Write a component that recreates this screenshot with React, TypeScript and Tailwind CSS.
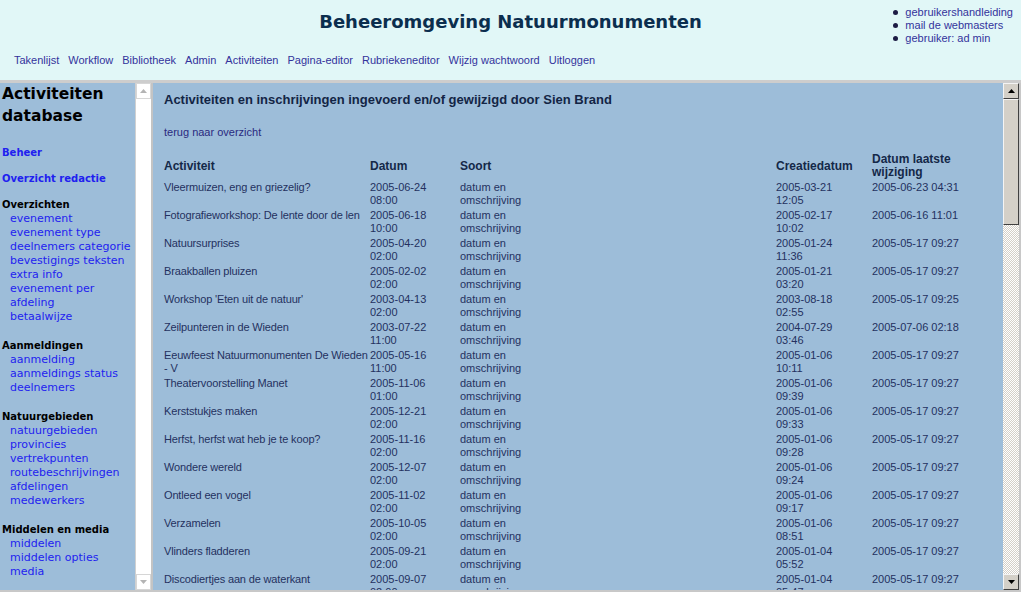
import React from 'react';

const sans = "font-['Liberation_Sans',Arial,sans-serif]";
const verdana = "font-['DejaVu_Sans',Verdana,sans-serif]";

const navItems = [
  'Takenlijst',
  'Workflow',
  'Bibliotheek',
  'Admin',
  'Activiteiten',
  'Pagina-editor',
  'Rubriekeneditor',
  'Wijzig wachtwoord',
  'Uitloggen',
];

const groups = [
  {
    title: 'Overzichten',
    links: ['evenement', 'evenement type', 'deelnemers categorie', 'bevestigings teksten', 'extra info', 'evenement per afdeling', 'betaalwijze'],
  },
  { title: 'Aanmeldingen', links: ['aanmelding', 'aanmeldings status', 'deelnemers'] },
  {
    title: 'Natuurgebieden',
    links: ['natuurgebieden', 'provincies', 'vertrekpunten', 'routebeschrijvingen', 'afdelingen', 'medewerkers'],
  },
  { title: 'Middelen en media', links: ['middelen', 'middelen opties', 'media'] },
];

// activiteit, datum, tijd, creatie datum, creatie tijd, laatste wijziging
const rows: [string, string, string, string, string, string][] = [
  ['Vleermuizen, eng en griezelig?', '2005-06-24', '08:00', '2005-03-21', '12:05', '2005-06-23 04:31'],
  ['Fotografieworkshop: De lente door de len', '2005-06-18', '10:00', '2005-02-17', '10:02', '2005-06-16 11:01'],
  ['Natuursurprises', '2005-04-20', '02:00', '2005-01-24', '11:36', '2005-05-17 09:27'],
  ['Braakballen pluizen', '2005-02-02', '02:00', '2005-01-21', '03:20', '2005-05-17 09:27'],
  ["Workshop 'Eten uit de natuur'", '2003-04-13', '02:00', '2003-08-18', '02:55', '2005-05-17 09:25'],
  ['Zeilpunteren in de Wieden', '2003-07-22', '11:00', '2004-07-29', '03:46', '2005-07-06 02:18'],
  ['Eeuwfeest Natuurmonumenten De Wieden - V', '2005-05-16', '11:00', '2005-01-06', '10:11', '2005-05-17 09:27'],
  ['Theatervoorstelling Manet', '2005-11-06', '01:00', '2005-01-06', '09:39', '2005-05-17 09:27'],
  ['Kerststukjes maken', '2005-12-21', '02:00', '2005-01-06', '09:33', '2005-05-17 09:27'],
  ['Herfst, herfst wat heb je te koop?', '2005-11-16', '02:00', '2005-01-06', '09:28', '2005-05-17 09:27'],
  ['Wondere wereld', '2005-12-07', '02:00', '2005-01-06', '09:24', '2005-05-17 09:27'],
  ['Ontleed een vogel', '2005-11-02', '02:00', '2005-01-06', '09:17', '2005-05-17 09:27'],
  ['Verzamelen', '2005-10-05', '02:00', '2005-01-06', '08:51', '2005-05-17 09:27'],
  ['Vlinders fladderen', '2005-09-21', '02:00', '2005-01-04', '05:52', '2005-05-17 09:27'],
  ['Discodiertjes aan de waterkant', '2005-09-07', '02:00', '2005-01-04', '05:47', '2005-05-17 09:27'],
];

const Arrow: React.FC<{ down?: boolean; color: string }> = ({ down, color }) => (
  <svg width="7" height="4" viewBox="0 0 7 4" className={down ? 'rotate-180' : ''}>
    <polygon points="3.5,0 7,4 0,4" fill={color} />
  </svg>
);

const App: React.FC = () => {
  return (
    <div className={`w-full h-screen overflow-hidden flex flex-col bg-[#e1f7f7] ${sans}`}>
      {/* header */}
      <div className="h-[80px] shrink-0">
        <div className="grid grid-cols-[1fr_auto_1fr] items-start">
          <div />
          <h1 className={`pt-[10px] leading-[24px] text-[18px] font-bold text-[#0b2e4e] ${verdana}`}>
            Beheeromgeving Natuurmonumenten
          </h1>
          <ul className="justify-self-end pt-[6px] pr-[8px] text-[11px] leading-[13px] text-[#33339c]">
            {['gebruikershandleiding', 'mail de webmasters', 'gebruiker: ad min'].map((t) => (
              <li key={t} className="flex items-center">
                <span className="w-[5px] h-[5px] rounded-full bg-[#1c1c44] mr-[7px]" />
                <span>{t}</span>
              </li>
            ))}
          </ul>
        </div>
        <div className="mt-[9px] pl-[14px] flex gap-[9px] text-[11px] leading-[13px] text-[#33339c]">
          {navItems.map((n) => (
            <span key={n}>{n}</span>
          ))}
        </div>
      </div>
      <div className="h-[3px] shrink-0 bg-[#cdcdcd]" />

      {/* frames */}
      <div className="flex h-[507px] shrink-0">
        {/* left frame */}
        <div className={`w-[135px] shrink-0 bg-[#9dbdd9] pl-[2px] overflow-hidden ${verdana}`}>
          <div className="text-[15.5px] font-bold leading-[22px] text-black">
            Activiteiten
            <br />
            database
          </div>
          <div className="mt-[19px] text-[10px] font-bold leading-[14px] text-[#2020f0]">Beheer</div>
          <div className="mt-[12px] text-[10px] font-bold leading-[14px] text-[#2020f0]">Overzicht redactie</div>
          <div className="mt-[11px]">
            {groups.map((g) => (
              <div key={g.title} className="mb-[14px]">
                <div className="text-[10px] font-bold leading-[15px] text-black">{g.title}</div>
                {g.links.map((l) => (
                  <div key={l} className="pl-[8px] text-[11px] leading-[14px] text-[#2222f0]">
                    {l}
                  </div>
                ))}
              </div>
            ))}
          </div>
        </div>

        {/* left scrollbar (disabled) */}
        <div className="w-[16px] shrink-0 bg-white border-l border-[#d0d0d0] flex flex-col justify-between">
          <div className="h-[16px] border border-[#d6d6d6] flex items-center justify-center">
            <Arrow color="#b4b4b4" />
          </div>
          <div className="h-[16px] border border-[#d6d6d6] flex items-center justify-center">
            <Arrow down color="#b4b4b4" />
          </div>
        </div>
        <div className="w-[2px] shrink-0 bg-[#c4c4c4]" />

        {/* main frame */}
        <div className="flex-1 bg-[#9dbdd9] overflow-hidden pl-[11px] pt-[9px]">
          <h2 className="text-[13px] font-bold leading-[16px] text-[#132545]">
            Activiteiten en inschrijvingen ingevoerd en/of gewijzigd door Sien Brand
          </h2>
          <div className="mt-[18px] text-[11px] leading-[13px] text-[#2a2a80]">terug naar overzicht</div>
          <table className="mt-[13px] table-fixed w-[833px] border-collapse text-[11px] leading-[13px] text-[#24315f]">
            <colgroup>
              <col className="w-[206px]" />
              <col className="w-[90px]" />
              <col className="w-[316px]" />
              <col className="w-[96px]" />
              <col className="w-[125px]" />
            </colgroup>
            <thead>
              <tr className="text-[12px] font-bold text-[#142848] text-left">
                <th className="p-0 pt-[1px] pb-[1px] h-[28px] align-middle">Activiteit</th>
                <th className="p-0 align-middle">Datum</th>
                <th className="p-0 align-middle">Soort</th>
                <th className="p-0 align-middle">Creatiedatum</th>
                <th className="p-0 align-middle leading-[13px]">
                  Datum laatste
                  <br />
                  wijziging
                </th>
              </tr>
            </thead>
            <tbody>
              {rows.map((r) => (
                <tr key={r[0]} className="align-top">
                  <td className="py-[1px] px-0 tracking-[-0.15px]">{r[0]}</td>
                  <td className="py-[1px] px-0">
                    {r[1]}
                    <br />
                    {r[2]}
                  </td>
                  <td className="py-[1px] px-0">
                    datum en
                    <br />
                    omschrijving
                  </td>
                  <td className="py-[1px] px-0">
                    {r[3]}
                    <br />
                    {r[4]}
                  </td>
                  <td className="py-[1px] px-0">{r[5]}</td>
                </tr>
              ))}
            </tbody>
          </table>
        </div>

        {/* main scrollbar */}
        <div className="w-[16px] shrink-0 flex flex-col bg-[image:repeating-conic-gradient(#d4d0c8_0_25%,#ffffff_0_50%)] bg-[length:2px_2px]">
          <div className="h-[16px] shrink-0 bg-[#d4d0c8] border border-t-[#f4f4f4] border-l-[#f4f4f4] border-r-[#404040] border-b-[#404040] flex items-center justify-center">
            <Arrow color="#000000" />
          </div>
          <div className="h-[126px] shrink-0 bg-[#d4d0c8] border border-t-[#f4f4f4] border-l-[#f4f4f4] border-r-[#404040] border-b-[#404040]" />
          <div className="flex-1" />
          <div className="h-[16px] shrink-0 bg-[#d4d0c8] border border-t-[#f4f4f4] border-l-[#f4f4f4] border-r-[#404040] border-b-[#404040] flex items-center justify-center">
            <Arrow down color="#000000" />
          </div>
        </div>
        <div className="w-[2px] shrink-0 bg-[#c8c8c8]" />
      </div>
      <div className="flex-1 bg-[#c8c8c8]" />
    </div>
  );
};

export default App;
